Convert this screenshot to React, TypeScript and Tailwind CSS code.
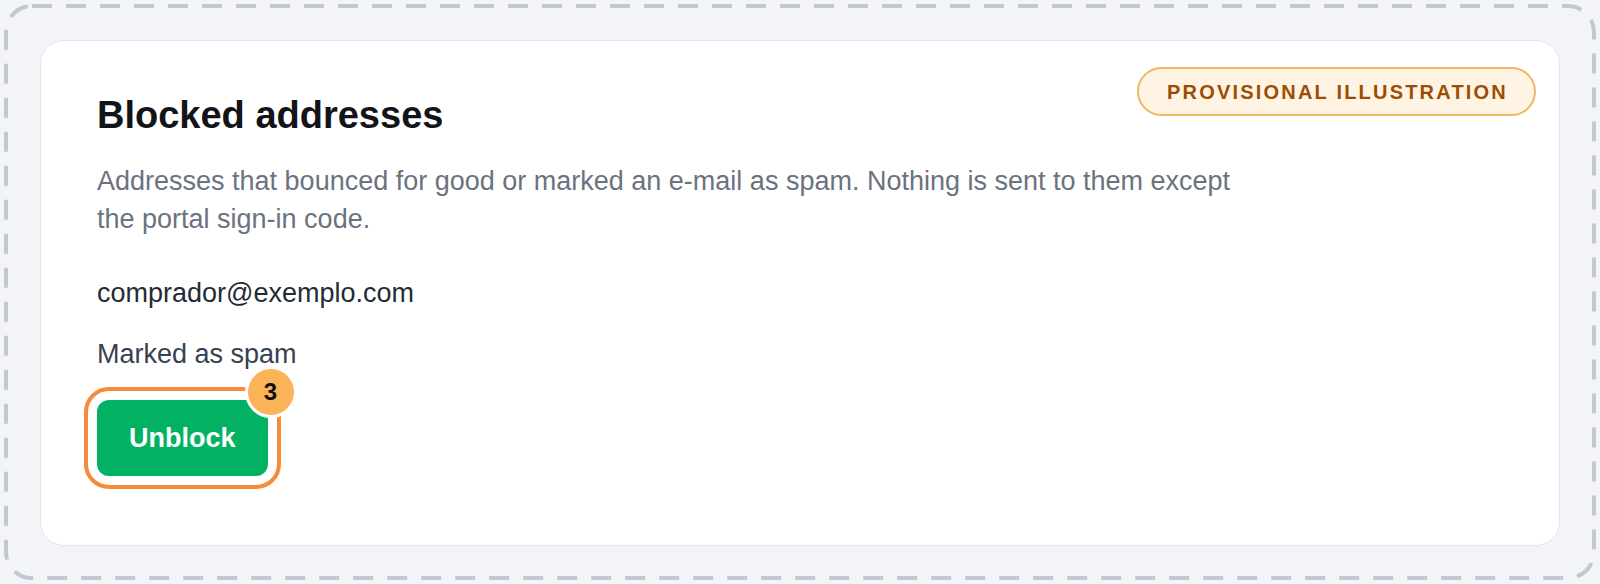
import React from 'react';

export default function App() {
  return (
    <div className="h-[584px] w-full bg-[#f3f4f8] p-[4px] font-['Liberation_Sans',Arial,sans-serif]">
      <div className="relative h-full px-[36px] pt-[36px] pb-[34px]">
        {/* dashed frame */}
        <svg
          className="pointer-events-none absolute inset-0"
          width="1592"
          height="576"
          viewBox="0 0 1592 576"
          fill="none"
        >
          <rect
            x="2"
            y="2"
            width="1588"
            height="572"
            rx="26"
            stroke="#c3c7d1"
            strokeWidth="4"
            strokeDasharray="20 14"
          />
        </svg>

        {/* Card */}
        <div className="relative h-full rounded-[24px] border border-[#e4e6eb] bg-white pl-[56px] pt-[52px]">
          <span className="absolute right-[23px] top-[26px] flex h-[49px] items-center rounded-full border-2 border-[#f2b565] bg-[#fff4e3] pl-[28px] pr-[26px] text-[20px] font-bold uppercase tracking-[0.11em] text-[#9c4d04]">
            Provisional illustration
          </span>

          <h1 className="text-[38px] font-bold leading-[44px] text-[#121418]">Blocked addresses</h1>
          <p className="mt-[25px] max-w-[1160px] text-[27px] leading-[38px] text-[#6b7280]">
            Addresses that bounced for good or marked an e-mail as spam. Nothing is sent to them except the portal
            sign-in code.
          </p>

          <div className="mt-[36px] text-[27px] leading-[38px] text-[#252b36]">comprador@exemplo.com</div>
          <div className="mt-[23px] text-[27px] leading-[38px] text-[#374151]">Marked as spam</div>

          <div className="mt-[27px]">
            <button className="relative h-[76px] rounded-[12px] bg-[#03b163] px-[32px] text-[27px] font-bold text-white outline-4 outline-solid outline-offset-[9px] outline-[#f68b3b]">
              Unblock
              <span className="absolute right-[-29px] top-[-34px] flex h-[52px] w-[52px] items-center justify-center rounded-full border-[3px] border-white bg-[#fbb357] text-[24px] font-bold text-[#111]">
                3
              </span>
            </button>
          </div>
        </div>
      </div>
    </div>
  );
}
